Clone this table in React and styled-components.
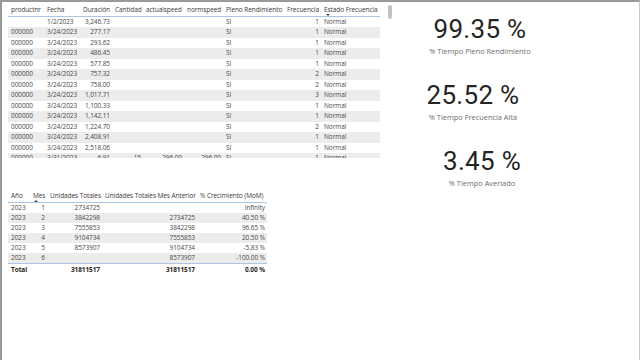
import styled, { createGlobalStyle } from "styled-components";

const GlobalStyle = createGlobalStyle`
  html, body {
    margin: 0;
    padding: 0;
    background: #fff;
  }
  body {
    font-family: "Open Sans", "Noto Sans", sans-serif;
  }
`;

const Frame = styled.div`
  width: 640px;
  height: 360px;
  box-sizing: border-box;
  border-top: 2px solid #9a9a9a;
  border-left: 2px solid #9a9a9a;
  border-right: 1px solid #c8c8c8;
  display: grid;
  grid-template-columns: 396px 1fr;
  overflow: hidden;
`;

const LeftColumn = styled.div`
  display: flex;
  flex-direction: column;
  padding: 1px 0 0 6px;
`;

const TopArea = styled.div`
  display: flex;
  gap: 8px;
  height: 155px;
`;

const Viewport = styled.div`
  width: 372px;
  height: 155px;
  overflow: hidden;
`;

const ScrollThumb = styled.div`
  width: 4px;
  height: 14px;
  margin-top: 2px;
  border-radius: 2px;
  background: #c2c2c2;
`;

const Table = styled.table`
  border-collapse: collapse;
  table-layout: fixed;
  width: ${(p) => p.$width}px;
  font-size: 6.5px;
  letter-spacing: -0.08px;
  color: #4a4948;
`;

const HeadCell = styled.th`
  position: relative;
  height: ${(p) => p.$h || 13}px;
  padding: 0 2px 0 3px;
  font-weight: 400;
  text-align: left;
  white-space: nowrap;
  color: #3b3a39;
  border-bottom: 1px solid #a9c6e4;
  vertical-align: middle;
`;

const SortArrow = styled.span`
  position: absolute;
  left: ${(p) => p.$left}px;
  bottom: 0px;
  width: 0;
  height: 0;
  border-left: 2px solid transparent;
  border-right: 2px solid transparent;
  ${(p) =>
    p.$up
      ? "border-bottom: 2.5px solid #444;"
      : "border-top: 2.5px solid #444;"}
`;

const Row = styled.tr`
  height: ${(p) => p.$h}px;
  background: ${(p) => (p.$odd ? "#ececec" : "#fff")};
`;

const Cell = styled.td`
  padding: 0 2px 0 3px;
  white-space: nowrap;
  overflow: hidden;
  text-align: ${(p) => (p.$right ? "right" : "left")};
  line-height: 1;
`;

const TotalRow = styled.tr`
  height: 12px;
  border-top: 1px solid #a9c6e4;
  font-weight: 700;
  color: #252423;
`;

const BottomArea = styled.div`
  margin-top: 30px;
`;

const KpiColumn = styled.div`
  display: flex;
  flex-direction: column;
  width: 164px;
  padding-top: 12px;
`;

const Kpi = styled.div`
  height: 66px;
  display: flex;
  flex-direction: column;
  align-items: center;
  transform: translateX(${(p) => p.$shift || 0}px);
`;

const KpiValue = styled.div`
  font-family: "Roboto", "DejaVu Sans", sans-serif;
  font-size: 26px;
  line-height: 30px;
  color: #252423;
  letter-spacing: 0.3px;
`;

const KpiLabel = styled.div`
  font-family: "Open Sans", sans-serif;
  font-size: 7.4px;
  line-height: 10px;
  margin-top: 2px;
  color: #6f6e6d;
`;

const topCols = [
  { name: "productnr", w: 36 },
  { name: "Fecha", w: 36 },
  { name: "Duración", w: 32, right: true },
  { name: "Cantidad", w: 31, right: true },
  { name: "actualspeed", w: 41, right: true },
  { name: "normspeed", w: 39, right: true },
  { name: "Pleno Rendimiento", w: 61 },
  { name: "Frecuencia", w: 37, right: true },
  { name: "Estado Frecuencia", w: 59 },
];

const topRows = [
  ["", "1/2/2023", "3,246.73", "", "", "", "SI", "1", "Normal"],
  ["000000", "3/24/2023", "277.17", "", "", "", "SI", "1", "Normal"],
  ["000000", "3/24/2023", "293.62", "", "", "", "SI", "1", "Normal"],
  ["000000", "3/24/2023", "486.45", "", "", "", "SI", "1", "Normal"],
  ["000000", "3/24/2023", "577.85", "", "", "", "SI", "1", "Normal"],
  ["000000", "3/24/2023", "757.32", "", "", "", "SI", "2", "Normal"],
  ["000000", "3/24/2023", "758.00", "", "", "", "SI", "2", "Normal"],
  ["000000", "3/24/2023", "1,017.71", "", "", "", "SI", "3", "Normal"],
  ["000000", "3/24/2023", "1,100.33", "", "", "", "SI", "1", "Normal"],
  ["000000", "3/24/2023", "1,142.11", "", "", "", "SI", "1", "Normal"],
  ["000000", "3/24/2023", "1,224.70", "", "", "", "SI", "2", "Normal"],
  ["000000", "3/24/2023", "2,408.91", "", "", "", "SI", "1", "Normal"],
  ["000000", "3/24/2023", "2,518.06", "", "", "", "SI", "1", "Normal"],
  ["000000", "3/31/2023", "6.91", "15", "296.00", "296.00", "SI", "1", "Normal"],
];

const monthCols = [
  { name: "Año", w: 22 },
  { name: "Mes", w: 17, right: true },
  { name: "Unidades Totales", w: 55, right: true },
  { name: "Unidades Totales Mes Anterior", w: 95, right: true },
  { name: "% Crecimiento (MoM)", w: 70, right: true },
];

const monthRows = [
  ["2023", "1", "2734725", "", "Infinity"],
  ["2023", "2", "3842298", "2734725", "40.50 %"],
  ["2023", "3", "7555853", "3842298", "96.65 %"],
  ["2023", "4", "9104734", "7555853", "20.50 %"],
  ["2023", "5", "8573907", "9104734", "-5.83 %"],
  ["2023", "6", "", "8573907", "-100.00 %"],
];

const kpis = [
  { value: "99.35 %", label: "% Tiempo Pleno Rendimiento" },
  { value: "25.52 %", label: "% Tiempo Frecuencia Alta", shift: -7 },
  { value: "3.45 %", label: "% Tiempo Averiado", shift: 2 },
];

const DataTable = ({ cols, rows, rowHeight, headHeight, sortCol, sortUp, sortLeft, total }) => (
  <Table $width={cols.reduce((s, c) => s + c.w, 0)}>
    <colgroup>
      {cols.map((c) => (
        <col key={c.name} style={{ width: c.w }} />
      ))}
    </colgroup>
    <thead>
      <tr>
        {cols.map((c, i) => (
          <HeadCell key={c.name} $h={headHeight}>
            {c.name}
            {i === sortCol && <SortArrow $up={sortUp} $left={sortLeft} />}
          </HeadCell>
        ))}
      </tr>
    </thead>
    <tbody>
      {rows.map((r, ri) => (
        <Row key={ri} $h={rowHeight} $odd={ri % 2 === 1}>
          {r.map((v, ci) => (
            <Cell key={ci} $right={cols[ci].right}>
              {v}
            </Cell>
          ))}
        </Row>
      ))}
      {total && (
        <TotalRow>
          {total.map((v, ci) => (
            <Cell key={ci} $right={cols[ci].right}>
              {v}
            </Cell>
          ))}
        </TotalRow>
      )}
    </tbody>
  </Table>
);

export default function App() {
  return (
    <>
      <GlobalStyle />
      <Frame>
        <LeftColumn>
          <TopArea>
            <Viewport>
              <DataTable
                cols={topCols}
                rows={topRows}
                rowHeight={10.5}
                headHeight={13}
                sortCol={8}
                sortLeft={5}
              />
            </Viewport>
            <ScrollThumb />
          </TopArea>
          <BottomArea>
            <DataTable
              cols={monthCols}
              rows={monthRows}
              rowHeight={10.2}
              headHeight={14}
              sortCol={1}
              sortUp
              sortLeft={4}
              total={["Total", "", "31811517", "31811517", "0.00 %"]}
            />
          </BottomArea>
        </LeftColumn>
        <KpiColumn>
          {kpis.map((k) => (
            <Kpi key={k.label} $shift={k.shift}>
              <KpiValue>{k.value}</KpiValue>
              <KpiLabel>{k.label}</KpiLabel>
            </Kpi>
          ))}
        </KpiColumn>
      </Frame>
    </>
  );
}
